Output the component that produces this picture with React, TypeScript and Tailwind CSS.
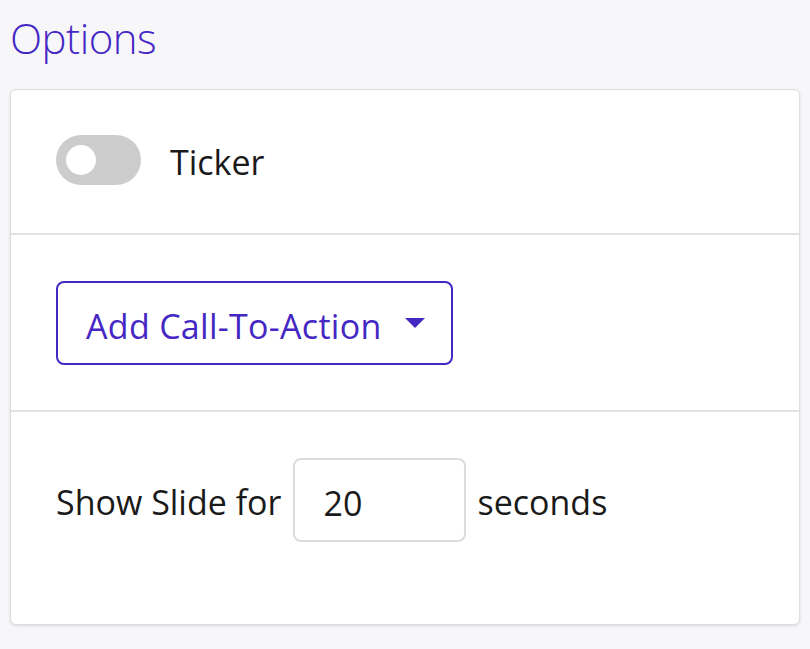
import { useState } from 'react';

export default function App() {
  const [ticker, setTicker] = useState(false);
  const [seconds, setSeconds] = useState('20');

  return (
    <div className="min-h-screen bg-[#f7f7fa] px-[10px] pt-[10px] pb-6" style={{ fontFamily: '"Open Sans", "Noto Sans", sans-serif' }}>
      <h1 className="text-[42px] leading-[56px] font-light text-[#4527c4] tracking-[-0.5px]">Options</h1>

      <div className="mt-[23px] bg-white border border-[#dedede] rounded-[6px] shadow-[0_1px_3px_rgba(0,0,0,0.12)]">
        <div className="flex items-center gap-[29px] px-[45px] pt-[45px] pb-[48px] border-b-2 border-[#e2e2e2]">
          <button
            onClick={() => setTicker(!ticker)}
            className={`relative w-[85px] h-[50px] rounded-full transition-colors ${ticker ? 'bg-[#4527c4]' : 'bg-[#cccccc]'}`}
          >
            <span className={`absolute top-[10px] w-[30px] h-[30px] rounded-full bg-white transition-all ${ticker ? 'left-[45px]' : 'left-[10px]'}`} />
          </button>
          <span className="pt-[5px] text-[34px] leading-[45px] text-[#1a1a1a]">Ticker</span>
        </div>

        <div className="px-[45px] pt-[46px] pb-[45px] border-b-2 border-[#e2e2e2]">
          <button className="flex items-center h-[84px] w-[397px] pl-[28px] pr-[26px] border-2 border-[#4527c4] rounded-[8px] text-[#4527c4] text-[34px] leading-none">
            <span className="pt-[5px] tracking-[0.3px]">Add Call-To-Action</span>
            <svg className="ml-auto" width="20" height="10" viewBox="0 0 20 10">
              <path d="M0 0 L20 0 L10 10 Z" fill="#4527c4" />
            </svg>
          </button>
        </div>

        <div className="flex items-center px-[45px] pt-[46px] pb-[82px]">
          <span className="pt-[5px] text-[34px] text-[#1a1a1a]">Show Slide for</span>
          <input
            value={seconds}
            onChange={e => setSeconds(e.target.value)}
            className="ml-[12px] w-[173px] h-[84px] border-2 border-[#dcdcdc] rounded-[8px] pl-[28px] pt-[5px] text-[34px] text-[#1a1a1a] outline-none"
          />
          <span className="ml-[11px] pt-[5px] text-[34px] text-[#1a1a1a]">seconds</span>
        </div>
      </div>
    </div>
  );
}
